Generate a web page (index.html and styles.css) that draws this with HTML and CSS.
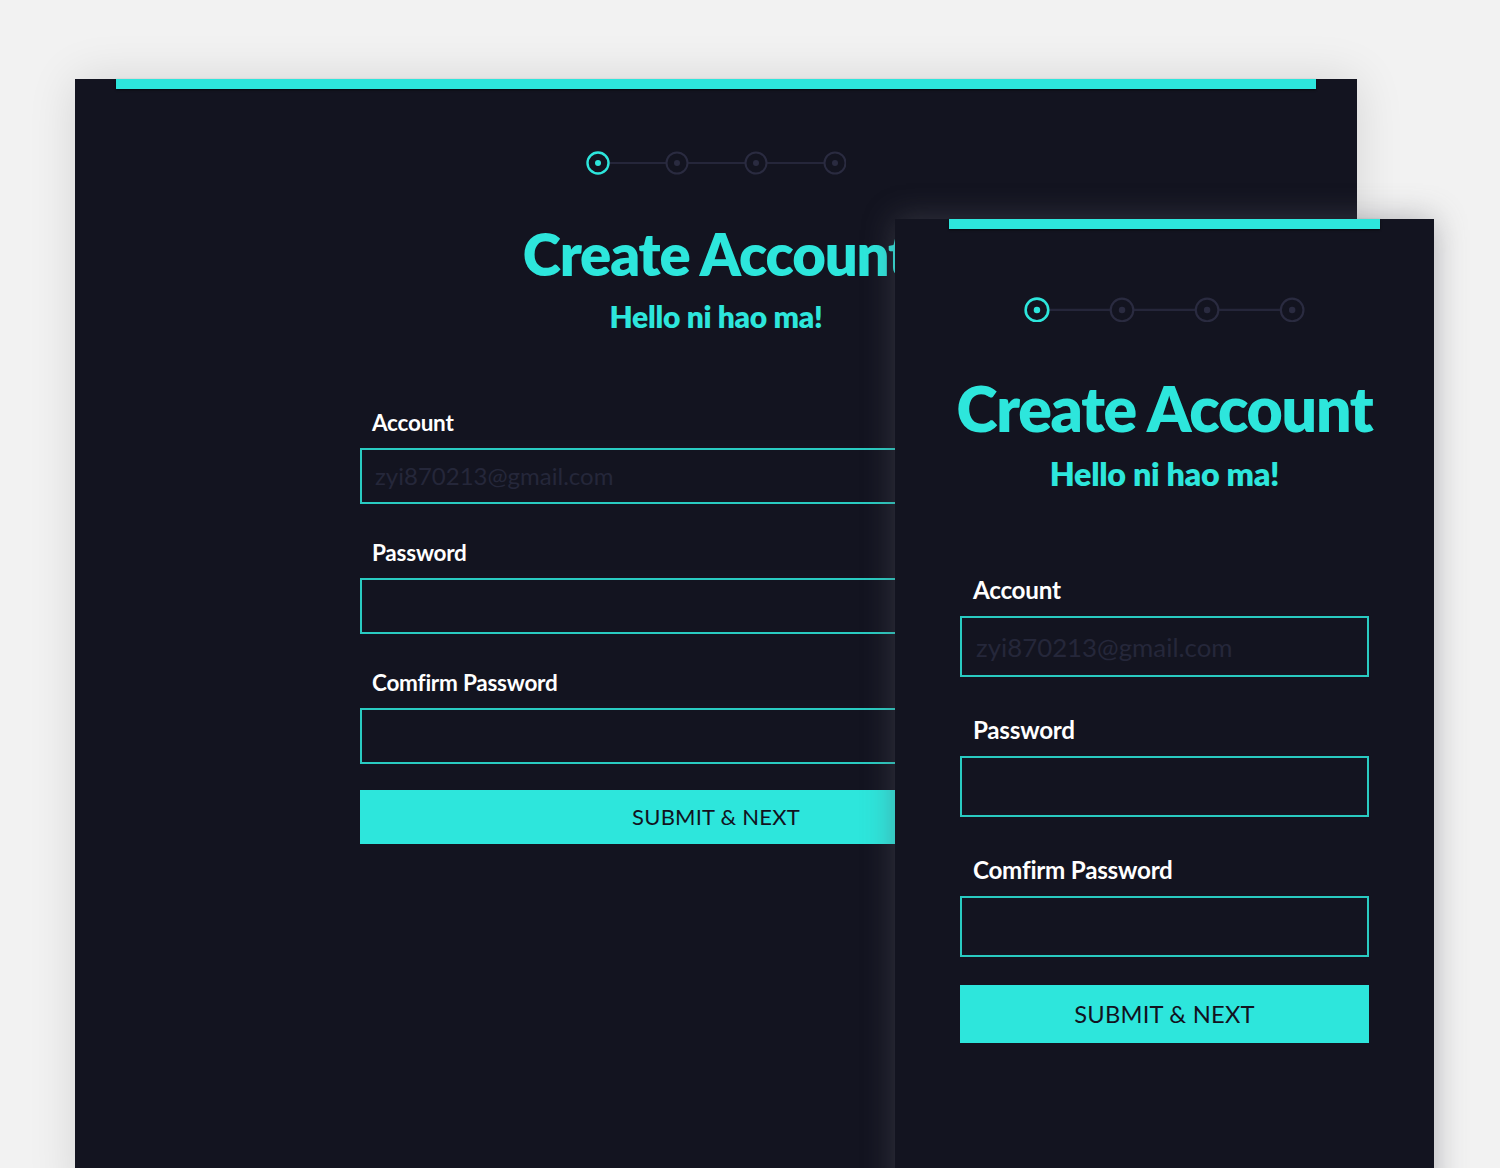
FILE: index.html
```html
<!DOCTYPE html>
<html lang="en">
<head>
<meta charset="utf-8">
<title>Create Account</title>
<link rel="stylesheet" href="styles.css">
</head>
<body>
<div class="stage">
  <section class="panel panel-lg">
    <div class="bar"></div>
    <svg class="steps" viewBox="0 0 260 24" aria-hidden="true">
      <line class="link" x1="23" y1="12" x2="80" y2="12"/>
      <line class="link" x1="102" y1="12" x2="159" y2="12"/>
      <line class="link" x1="181" y1="12" x2="238" y2="12"/>
      <circle class="ring on" cx="12" cy="12" r="10.5"/>
      <circle class="dot on" cx="12" cy="12" r="3"/>
      <circle class="ring" cx="91" cy="12" r="10.5"/>
      <circle class="dot" cx="91" cy="12" r="3"/>
      <circle class="ring" cx="170" cy="12" r="10.5"/>
      <circle class="dot" cx="170" cy="12" r="3"/>
      <circle class="ring" cx="249" cy="12" r="10.5"/>
      <circle class="dot" cx="249" cy="12" r="3"/>
    </svg>
    <h1 class="title">Create Account</h1>
    <p class="subtitle">Hello ni hao ma!</p>
    <form class="form">
      <label class="label">Account</label>
      <input class="field" type="text" placeholder="zyi870213@gmail.com">
      <label class="label">Password</label>
      <input class="field" type="password">
      <label class="label">Comfirm Password</label>
      <input class="field last" type="password">
      <button class="submit" type="button">SUBMIT &amp; NEXT</button>
    </form>
  </section>

  <section class="panel panel-sm">
    <div class="bar"></div>
    <svg class="steps" viewBox="0 0 260 24" aria-hidden="true">
      <line class="link" x1="23" y1="12" x2="80" y2="12"/>
      <line class="link" x1="102" y1="12" x2="159" y2="12"/>
      <line class="link" x1="181" y1="12" x2="238" y2="12"/>
      <circle class="ring on" cx="12" cy="12" r="10.5"/>
      <circle class="dot on" cx="12" cy="12" r="3"/>
      <circle class="ring" cx="91" cy="12" r="10.5"/>
      <circle class="dot" cx="91" cy="12" r="3"/>
      <circle class="ring" cx="170" cy="12" r="10.5"/>
      <circle class="dot" cx="170" cy="12" r="3"/>
      <circle class="ring" cx="249" cy="12" r="10.5"/>
      <circle class="dot" cx="249" cy="12" r="3"/>
    </svg>
    <h1 class="title">Create Account</h1>
    <p class="subtitle">Hello ni hao ma!</p>
    <form class="form">
      <label class="label">Account</label>
      <input class="field" type="text" placeholder="zyi870213@gmail.com">
      <label class="label">Password</label>
      <input class="field" type="password">
      <label class="label">Comfirm Password</label>
      <input class="field last" type="password">
      <button class="submit" type="button">SUBMIT &amp; NEXT</button>
    </form>
  </section>
</div>
</body>
</html>
```
FILE: styles.css
```css
* { box-sizing: border-box; }

html, body {
  margin: 0;
  height: 1168px;
  overflow: hidden;
}

body {
  background: #f2f2f2;
  font-family: Lato, "Open Sans", sans-serif;
}

.stage {
  position: relative;
  padding: 79px 0 0 75px;
}

.panel {
  --u: 1px;
  background: #131420;
  display: flex;
  flex-direction: column;
  align-items: center;
}

.panel > * { flex-shrink: 0; }

.panel-lg {
  width: 1282px;
  height: 1120px;
  box-shadow: 0 0 45px rgba(0, 0, 0, 0.12);
}

.panel-sm {
  --u: 1.077px;
  position: absolute;
  left: 895px;
  top: 219px;
  width: 539px;
  height: 980px;
  box-shadow: 0 0 30px rgba(95, 95, 105, 0.45);
}

.bar {
  height: calc(var(--u) * 9.5);
  background: #2de6dc;
  box-shadow: 0 1px 2px rgba(0, 0, 0, 0.6);
}

.panel-lg .bar { width: 1200px; }
.panel-sm .bar { width: 431px; }

.steps {
  display: block;
  width: calc(var(--u) * 260);
  height: calc(var(--u) * 24);
  margin-top: calc(var(--u) * 62.5);
}

.steps .link {
  stroke: #25263a;
  stroke-width: 2;
}

.steps .ring {
  fill: #131420;
  stroke: #2a2b40;
  stroke-width: 2;
}

.steps .dot { fill: #2a2b40; }
.steps .ring.on { stroke: #2de6dc; stroke-width: 2.4; }
.steps .dot.on { fill: #2de6dc; }

.title {
  margin: calc(var(--u) * 50.4) 0 0;
  font-size: calc(var(--u) * 58);
  line-height: 1;
  font-weight: 800;
  color: #2de6dc;
  letter-spacing: -0.02em;
}

.subtitle {
  margin: calc(var(--u) * 18) 0 0;
  font-size: calc(var(--u) * 30);
  line-height: 1;
  font-weight: 800;
  color: #2de6dc;
  letter-spacing: -0.01em;
}

.form {
  display: flex;
  flex-direction: column;
  margin-top: calc(var(--u) * 80.6);
}

.panel-lg .form { width: 712px; }
.panel-sm .form { width: 409px; }

.label {
  font-size: calc(var(--u) * 22.5);
  line-height: 1;
  font-weight: 700;
  color: #ffffff;
  padding-left: calc(var(--u) * 12);
  margin-bottom: calc(var(--u) * 13.5);
  letter-spacing: -0.01em;
}

.field {
  height: calc(var(--u) * 56);
  border: 2px solid #29cbc1;
  background: transparent;
  margin: 0 0 calc(var(--u) * 38);
  padding: 0 calc(var(--u) * 13);
  font-family: Lato, "Open Sans", sans-serif;
  font-size: calc(var(--u) * 24);
  color: #ffffff;
  outline: none;
}

.field::placeholder {
  color: #25273a;
}

.field.last { margin-bottom: calc(var(--u) * 26); }

.submit {
  height: calc(var(--u) * 54);
  border: 0;
  background: #2de6dc;
  color: #12131f;
  font-family: Lato, "Open Sans", sans-serif;
  font-size: calc(var(--u) * 22);
  letter-spacing: 0.01em;
  padding: 0;
  cursor: pointer;
}
```
